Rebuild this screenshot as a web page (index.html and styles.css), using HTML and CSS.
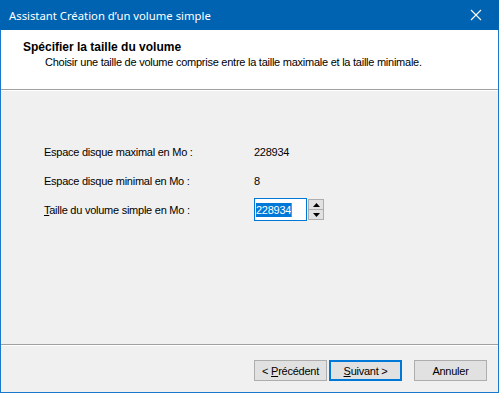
FILE: index.html
```html
<!DOCTYPE html>
<html lang="fr">
<head>
    <meta charset="UTF-8">
    <title>Assistant Création d'un volume simple</title>
    <link rel="stylesheet" href="styles.css">
</head>
<body>

<div class="window">
    <div class="titlebar">
        <span class="title">Assistant Création d’un volume simple</span>
        <span class="close">
            <svg width="12" height="12" viewBox="0 0 12 12"><path d="M1 1L11 11M11 1L1 11" stroke="#fff" stroke-width="1.1"/></svg>
        </span>
    </div>

    <div class="wizard-header">
        <h1>Spécifier la taille du volume</h1>
        <p>Choisir une taille de volume comprise entre la taille maximale et la taille minimale.</p>
    </div>
    <div class="etched"></div>

    <div class="wizard-body">
        <div class="field-row">
            <span class="field-label">Espace disque maximal en Mo :</span>
            <span class="field-value">228934</span>
        </div>
        <div class="field-row">
            <span class="field-label">Espace disque minimal en Mo :</span>
            <span class="field-value">8</span>
        </div>
        <div class="field-row">
            <span class="field-label"><u>T</u>aille du volume simple en Mo :</span>
            <div class="spin">
                <div class="spin-input"><span class="selected">228934</span><span class="caret"></span></div>
                <div class="spin-buttons">
                    <span class="spin-btn"><svg width="7" height="4" viewBox="0 0 7 4"><path d="M3.5 0L7 4H0Z" fill="#000"/></svg></span>
                    <span class="spin-btn"><svg width="7" height="4" viewBox="0 0 7 4"><path d="M0 0H7L3.5 4Z" fill="#000"/></svg></span>
                </div>
            </div>
        </div>
    </div>

    <div class="etched"></div>
    <div class="wizard-footer">
        <button class="btn">&lt; <u>P</u>récédent</button>
        <button class="btn default"><u>S</u>uivant &gt;</button>
        <button class="btn cancel">Annuler</button>
    </div>
</div>

</body>
</html>
```

FILE: styles.css
```css
/* fenêtre de l'assistant */
body {
    margin: 0;
    padding: 0;
    background-color: #f0f0f0;
    font-family: 'Liberation Sans', Arial, sans-serif;
    font-size: 11px;
    letter-spacing: -0.25px;
    color: #000;
}

.window {
    width: 499px;
    height: 393px;
    box-sizing: border-box;
    border: 1px solid #1979ca;
    border-top: none;
    background-color: #f0f0f0;
    display: flex;
    flex-direction: column;
}

.titlebar {
    height: 30px;
    background-color: #0063b1;
    color: #fff;
    display: flex;
    align-items: center;
    justify-content: space-between;
    margin: 0 -1px;
    padding-left: 9px;
    font-family: 'Noto Sans', 'Open Sans', sans-serif;
    font-size: 11.3px;
    letter-spacing: 0;
}

.close {
    width: 46px;
    height: 30px;
    display: flex;
    align-items: center;
    justify-content: center;
}

.wizard-header {
    height: 59px;
    box-sizing: border-box;
    background-color: #fff;
    padding: 11px 0 0 22px;
}

.wizard-header h1 {
    margin: 0;
    font-size: 12px;
    font-weight: bold;
    letter-spacing: 0;
    line-height: 13px;
}

.wizard-header p {
    margin: 2px 0 0 22px;
    line-height: 13px;
}

.etched {
    height: 1px;
    background-color: #a0a0a0;
    border-bottom: 1px solid #fff;
}

.wizard-body {
    flex: 1;
    padding: 49px 0 0 43px;
    display: flex;
    flex-direction: column;
    gap: 6px;
}

.field-row {
    display: flex;
    align-items: center;
    height: 23px;
}

.field-label {
    width: 210px;
}

.spin {
    display: flex;
    align-items: center;
    gap: 1px;
}

.spin-input {
    width: 53px;
    height: 23px;
    box-sizing: border-box;
    border: 1px solid #0078d7;
    background-color: #fff;
    display: flex;
    align-items: center;
    padding-left: 1px;
}

.selected {
    background-color: #0078d7;
    color: #fff;
    line-height: 14px;
}

.caret {
    width: 1px;
    height: 14px;
    background-color: #e87a00;
}

.spin-buttons {
    display: flex;
    flex-direction: column;
    border: 1px solid #adadad;
    gap: 1px;
    background-color: #adadad;
}

.spin-btn {
    width: 14px;
    height: 9px;
    background-color: #e1e1e1;
    display: flex;
    align-items: center;
    justify-content: center;
}

.wizard-footer {
    height: 46px;
    display: flex;
    align-items: flex-start;
    padding: 14px 0 0 253px;
    box-sizing: border-box;
}

.btn {
    width: 73px;
    height: 21px;
    box-sizing: border-box;
    border: 1px solid #adadad;
    background-color: #e1e1e1;
    font-family: 'Liberation Sans', Arial, sans-serif;
    font-size: 11px;
    letter-spacing: -0.25px;
    color: #000;
    padding: 0;
    margin-right: 2px;
}

.btn.default {
    border: 2px solid #0078d7;
}

.btn.cancel {
    margin-left: 10px;
}
```
